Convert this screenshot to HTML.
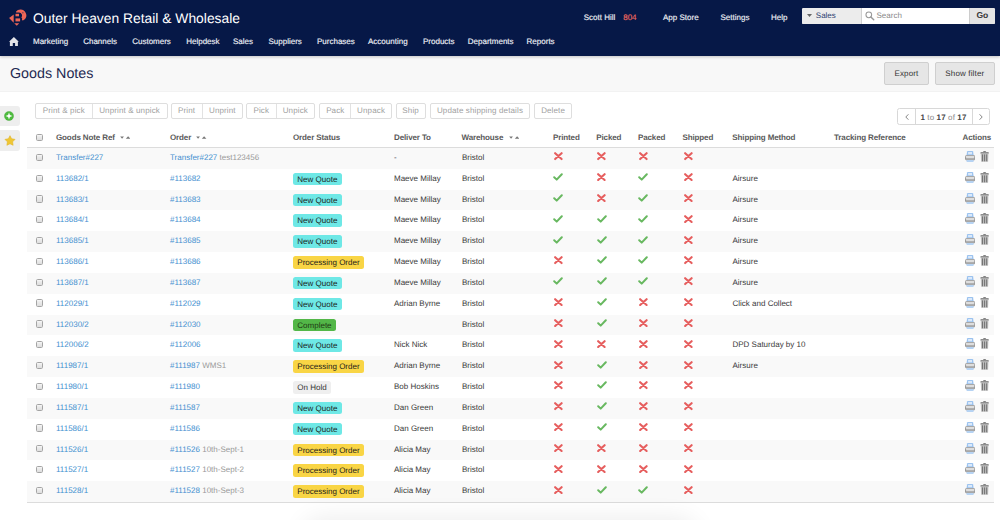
<!DOCTYPE html>
<html><head><meta charset="utf-8"><title>Goods Notes</title>
<style>
*{box-sizing:border-box;margin:0;padding:0}
html,body{width:1000px;height:520px;overflow:hidden;background:#fff}
body{position:relative;font-family:"Liberation Sans",sans-serif;font-size:8px;color:#333;text-rendering:geometricPrecision}
.abs{position:absolute;white-space:nowrap}
#top{position:absolute;left:0;top:0;width:1000px;height:56px;background:#061847;box-shadow:0 1px 3px rgba(0,0,0,0.22);z-index:2}
#brand{position:absolute;left:33px;top:12.3px;font-size:13.85px;line-height:13px;color:#fff;white-space:nowrap}
.nav{position:absolute;top:37.5px;line-height:8px;font-size:8px;color:#eef0f6;white-space:nowrap;-webkit-text-stroke:0.15px #eef0f6}
.rnav{position:absolute;top:14.25px;line-height:8px;font-size:8px;color:#eef0f6;white-space:nowrap;-webkit-text-stroke:0.15px #eef0f6}
#search{position:absolute;left:802px;top:8.3px;width:192.5px;height:15.3px;background:#fff;border-radius:1.5px;overflow:hidden}
#search .dd{position:absolute;left:0;top:0;width:60px;height:100%;background:#ececec;border-right:0.5px solid #d0d0d0}
#search .go{position:absolute;right:0;top:0;width:25.3px;height:100%;background:#e4e4e4;border-left:0.5px solid #ccc;font-weight:bold;font-size:8.5px;color:#333;text-align:center;line-height:15px}
#band{position:absolute;left:0;top:56px;width:1000px;height:36px;background:#f8f8f8;border-bottom:0.7px solid #f2f2f2}
#title{position:absolute;left:10px;top:66.6px;font-size:14.3px;line-height:15px;color:#1f2a52;white-space:nowrap}
.bbtn{position:absolute;top:62px;height:22.5px;background:#e6e6e6;border:0.7px solid #cfcfcf;border-radius:2px;color:#333;font-size:8px;line-height:21.5px;text-align:center;letter-spacing:0.15px}
.side{position:absolute;left:0;width:20.2px;height:20.7px;background:#eeeeee;border-radius:0 3px 3px 0}
.tb{position:absolute;top:103px;height:15.5px;border:0.7px solid #dedede;border-radius:2px;background:#fff;display:flex}
.tb span{display:block;height:100%;line-height:14px;color:#a0a0a0;text-align:center;white-space:nowrap;letter-spacing:0.13px}
.tb span+span{border-left:0.7px solid #e2e2e2}
#pag{position:absolute;left:897.4px;top:107.8px;width:92.3px;height:17px;border:0.7px solid #d8d8d8;border-radius:2.5px;background:#fff}
#pag .d1{position:absolute;left:16.8px;top:0;bottom:0;border-left:0.7px solid #d8d8d8}
#pag .d2{position:absolute;left:73.9px;top:0;bottom:0;border-left:0.7px solid #d8d8d8}
.th{position:absolute;top:133.5px;font-weight:bold;color:#5a5a5a;letter-spacing:-0.12px;line-height:8px;white-space:nowrap}
.sort{position:absolute;top:136.1px;width:10.4px;height:3.2px}
#hline{position:absolute;left:27px;top:146.8px;width:967px;height:1px;background:#dcdcdc}
#bline{position:absolute;left:27px;top:502px;width:967px;height:1px;background:#dcdcdc}
.row{position:absolute;left:27px;width:967px;height:20.83px}
.row.odd{background:#f9f9f9}
.row .t{position:absolute;top:0;line-height:19.3px;white-space:nowrap;color:#3a3a3a}
.lnk{color:#4490d0;text-decoration:none}
.row a.t{color:#4490d0}
.mut{color:#999}
.cb{position:absolute;left:9px;width:7.2px;height:7.2px;border:0.8px solid #a4a4a4;border-radius:1.6px;background:linear-gradient(#f2f2f2,#dedede);box-shadow:inset 0 0.5px 0.5px rgba(255,255,255,0.6)}
.th .cb{position:relative;left:0;display:block}
.badge{position:absolute;left:266.2px;top:3.9px;height:12.6px;line-height:13px;padding:0 4.15px;border-radius:2.5px;color:#1b1b1b;white-space:nowrap}
.b-nq{background:#6ee8e6}
.b-po{background:#f9d545}
.b-co{background:#53b748;color:#1e3a14}
.b-oh{background:#efefef;color:#333}
.icw{position:absolute;top:4.3px;line-height:0}
.ic{display:block}
.acts{position:absolute;left:937.8px;top:2.9px;width:30px;height:12px;line-height:0}
.acts .pr{position:absolute;left:0;top:0}
.acts .tr{position:absolute;left:15.1px;top:0}
</style></head><body>
<div id="top">
  <svg style="position:absolute;left:8.6px;top:9.4px" width="18" height="17.5" viewBox="0 0 18 17.5">
    <path d="M0.1 9 L4.7 5.4 L4.7 13.7 Z" fill="#ee6657"/>
    <path d="M7.1 2.4 Q8.8 0.2 12 0.4 Q16.6 1.1 17.4 6 Q17.6 9.6 13.9 11.6 L12.9 10.9 Q13.7 9.4 12.4 8.5 Q13.5 7.3 12.9 5.6 Q12.2 3.6 10 3.6 L7.1 3.6 Z" fill="#ee6657"/>
    <circle cx="13.9" cy="3.7" r="0.55" fill="#061847"/>
    <rect x="6.5" y="4.8" width="3.5" height="2.5" fill="#ee6657"/>
    <rect x="6.5" y="9.4" width="4.6" height="3" fill="#ee6657"/>
    <path d="M5.2 14.3 H10.2 L7.8 16.8 Z" fill="#ee6657"/>
  </svg>
  <div id="brand">Outer Heaven Retail &amp; Wholesale</div>
  <svg style="position:absolute;left:9.1px;top:36.6px" width="9.8" height="9.2" viewBox="0 0 9.8 9.2">
    <path d="M4.9 0.1 L9.8 4.7 L8.9 4.7 L8.9 9.2 L6.1 9.2 L6.1 6.1 L3.8 6.1 L3.8 9.2 L0.9 9.2 L0.9 4.7 L0 4.7 Z" fill="#e2e3e8"/>
  </svg>
  <span class="nav" style="left:33px">Marketing</span>
  <span class="nav" style="left:83.2px">Channels</span>
  <span class="nav" style="left:132.2px">Customers</span>
  <span class="nav" style="left:186.2px">Helpdesk</span>
  <span class="nav" style="left:233px">Sales</span>
  <span class="nav" style="left:268.5px">Suppliers</span>
  <span class="nav" style="left:317px">Purchases</span>
  <span class="nav" style="left:368px">Accounting</span>
  <span class="nav" style="left:423px">Products</span>
  <span class="nav" style="left:467.8px">Departments</span>
  <span class="nav" style="left:526.6px">Reports</span>
  <span class="rnav" style="left:583.7px">Scott Hill</span>
  <span class="rnav" style="left:623.2px;color:#f06a5e;-webkit-text-stroke:0.15px #f06a5e">804</span>
  <span class="rnav" style="left:663px">App Store</span>
  <span class="rnav" style="left:720.5px">Settings</span>
  <span class="rnav" style="left:771px">Help</span>
  <div id="search">
    <div class="dd">
      <svg style="position:absolute;left:5.2px;top:6px" width="5" height="3" viewBox="0 0 5 3"><path d="M0 0 H5 L2.5 3 Z" fill="#666"/></svg>
      <span class="abs" style="left:13.8px;top:3.9px;line-height:8px;color:#2d3e72">Sales</span>
    </div>
    <svg style="position:absolute;left:63.3px;top:3.1px" width="9.5" height="9.5" viewBox="0 0 10 10"><circle cx="4" cy="4" r="3" fill="none" stroke="#999" stroke-width="1.1"/><path d="M6.2 6.2 L9.2 9.2" stroke="#999" stroke-width="1.5" stroke-linecap="round"/></svg>
    <span class="abs" style="left:74.5px;top:3.9px;line-height:8px;color:#8a8a8a">Search</span>
    <div class="go">Go</div>
  </div>
</div>
<div id="band"></div>
<div id="title">Goods Notes</div>
<div class="bbtn" style="left:884.3px;width:44.4px">Export</div>
<div class="bbtn" style="left:935px;width:59.6px">Show filter</div>

<div class="side" style="top:105.8px">
  <svg style="position:absolute;left:4.3px;top:5.6px" width="10" height="10" viewBox="0 0 10 10"><circle cx="5" cy="5" r="4.6" fill="#4dbb3d" stroke="#3f9f33" stroke-width="0.35"/><path d="M1.6 5 L4.1 3.9 L5 1.6 L5.9 3.9 L8.4 5 L5.9 6.1 L5 8.4 L4.1 6.1 Z" fill="#fff"/></svg>
</div>
<div class="side" style="top:130.2px">
  <svg style="position:absolute;left:3.8px;top:4.6px" width="12" height="12" viewBox="0 0 12 12"><path d="M6.00 0.70 L7.62 3.78 L11.04 4.36 L8.62 6.85 L9.12 10.29 L6.00 8.75 L2.88 10.29 L3.38 6.85 L0.96 4.36 L4.38 3.78 Z" fill="#efc634" stroke="#e0b52a" stroke-width="0.6" stroke-linejoin="round"/></svg>
</div>

<div class="tb" style="left:35px;width:132.50px"><span style="width:56.50px">Print &amp; pick</span><span style="width:76.00px">Unprint &amp; unpick</span></div>
<div class="tb" style="left:170.5px;width:72.50px"><span style="width:31.00px">Print</span><span style="width:41.50px">Unprint</span></div>
<div class="tb" style="left:246px;width:69.00px"><span style="width:29.50px">Pick</span><span style="width:39.50px">Unpick</span></div>
<div class="tb" style="left:319.25px;width:72.50px"><span style="width:31.00px">Pack</span><span style="width:41.50px">Unpack</span></div>
<div class="tb" style="left:395.75px;width:29.75px"><span style="width:29.75px">Ship</span></div>
<div class="tb" style="left:429.6px;width:100.80px"><span style="width:100.80px">Update shipping details</span></div>
<div class="tb" style="left:534.2px;width:37.80px"><span style="width:37.80px">Delete</span></div>

<div id="pag">
  <div class="d1"></div><div class="d2"></div>
  <svg style="position:absolute;left:6.3px;top:5px" width="4" height="6" viewBox="0 0 4 6"><path d="M3.4 0.3 L0.8 3 L3.4 5.7" fill="none" stroke="#808080" stroke-width="0.95"/></svg>
  <span class="abs" style="left:22px;top:5.6px;line-height:8px;color:#888;letter-spacing:0.12px"><b style="color:#444">1</b> to <b style="color:#444">17</b> of <b style="color:#444">17</b></span>
  <svg style="position:absolute;left:80.6px;top:5px" width="4" height="6" viewBox="0 0 4 6"><path d="M0.6 0.3 L3.2 3 L0.6 5.7" fill="none" stroke="#808080" stroke-width="0.95"/></svg>
</div>

<div class="cb" style="position:absolute;left:35.7px;top:133.8px"></div>
<span class="th" style="left:56px">Goods Note Ref</span>
<svg class="sort" style="left:120px" viewBox="0 0 10 3"><path d="M0.2 0.4 H3.8 L2 2.6 Z M5.6 2.6 H10 L7.8 0.3 Z" fill="#777"/></svg>
<span class="th" style="left:170px">Order</span>
<svg class="sort" style="left:196.3px" viewBox="0 0 10 3"><path d="M0.2 0.4 H3.8 L2 2.6 Z M5.6 2.6 H10 L7.8 0.3 Z" fill="#777"/></svg>
<span class="th" style="left:293px">Order Status</span>
<span class="th" style="left:394px">Deliver To</span>
<span class="th" style="left:461.5px">Warehouse</span>
<svg class="sort" style="left:508.5px" viewBox="0 0 10 3"><path d="M0.2 0.4 H3.8 L2 2.6 Z M5.6 2.6 H10 L7.8 0.3 Z" fill="#777"/></svg>
<span class="th" style="left:553px">Printed</span>
<span class="th" style="left:596.3px">Picked</span>
<span class="th" style="left:638px">Packed</span>
<span class="th" style="left:682.5px">Shipped</span>
<span class="th" style="left:732.3px">Shipping Method</span>
<span class="th" style="left:834px">Tracking Reference</span>
<span class="th" style="left:962.6px">Actions</span>
<div id="hline"></div>
<div class="row odd" style="top:148.00px"><div class="cb" style="top:5.7px"></div><a class="t lnk" style="left:29px">Transfer#227</a><span class="t" style="left:143px"><a class="lnk">Transfer#227</a> <span class="mut">test123456</span></span><span class="t" style="left:367px">-</span><span class="t" style="left:435px">Bristol</span><span class="icw" style="left:527px"><svg class="ic" width="9" height="8.3" viewBox="0 0 9 8.3"><path d="M1.15 1.15 L7.6 7.1 M7.6 1.15 L1.15 7.1" fill="none" stroke="#e65e5e" stroke-width="2.1" stroke-linecap="round"/></svg></span><span class="icw" style="left:570.4px"><svg class="ic" width="9" height="8.3" viewBox="0 0 9 8.3"><path d="M1.15 1.15 L7.6 7.1 M7.6 1.15 L1.15 7.1" fill="none" stroke="#e65e5e" stroke-width="2.1" stroke-linecap="round"/></svg></span><span class="icw" style="left:612.25px"><svg class="ic" width="9" height="8.3" viewBox="0 0 9 8.3"><path d="M1.15 1.15 L7.6 7.1 M7.6 1.15 L1.15 7.1" fill="none" stroke="#e65e5e" stroke-width="2.1" stroke-linecap="round"/></svg></span><span class="icw" style="left:656.75px"><svg class="ic" width="9" height="8.3" viewBox="0 0 9 8.3"><path d="M1.15 1.15 L7.6 7.1 M7.6 1.15 L1.15 7.1" fill="none" stroke="#e65e5e" stroke-width="2.1" stroke-linecap="round"/></svg></span><span class="acts"><svg class="pr" width="10.2" height="11" viewBox="0 0 10.2 11">
<path d="M1.5 4.6 L2.1 0.5 Q2.2 0.1 2.6 0.1 H7.6 Q8 0.1 8.1 0.5 L8.7 4.6 Z" fill="#9cc3ef"/>
<rect x="3.1" y="1" width="3.9" height="2.3" fill="#dbe9fa"/>
<rect x="0" y="4.1" width="10.2" height="5.4" rx="2" fill="#949494"/>
<rect x="0.7" y="4.7" width="8.8" height="2.4" rx="1" fill="#dedede"/>
<rect x="0.7" y="7.2" width="8.8" height="1.3" rx="0.6" fill="#b9b9b9"/>
<path d="M1.5 8.9 H8.7 L8.5 10.9 H1.7 Z" fill="#b6d3f3"/>
</svg><svg class="tr" width="9.2" height="11" viewBox="0 0 9.2 11">
<path d="M2.9 1.3 Q3 0.1 4.6 0.1 Q6.2 0.1 6.3 1.3 Z" fill="#7c7c7c"/>
<path d="M0.4 1.7 Q0.4 1.1 1.1 1.1 H8.1 Q8.8 1.1 8.8 1.7 L8.7 2.8 H0.5 Z" fill="#8e8e8e"/>
<path d="M0.8 2.7 H8.4 L8.1 10.8 H1.1 Z" fill="#c0c0c0"/>
<rect x="2" y="3.4" width="1.05" height="6.9" fill="#747474"/>
<rect x="4.07" y="3.4" width="1.05" height="6.9" fill="#747474"/>
<rect x="6.15" y="3.4" width="1.05" height="6.9" fill="#747474"/>
</svg></span></div><div class="row" style="top:168.83px"><div class="cb" style="top:5.7px"></div><a class="t lnk" style="left:29px">113682/1</a><span class="t" style="left:143px"><a class="lnk">#113682</a></span><span class="badge b-nq">New Quote</span><span class="t" style="left:367px">Maeve Millay</span><span class="t" style="left:435px">Bristol</span><span class="icw" style="left:527px"><svg class="ic" style="margin-left:-0.9px" width="10" height="8" viewBox="0 0 10 8"><path d="M1.2 4.2 L3.7 6.6 L8.8 1.2" fill="none" stroke="#68b860" stroke-width="2" stroke-linecap="round" stroke-linejoin="round"/></svg></span><span class="icw" style="left:570.4px"><svg class="ic" width="9" height="8.3" viewBox="0 0 9 8.3"><path d="M1.15 1.15 L7.6 7.1 M7.6 1.15 L1.15 7.1" fill="none" stroke="#e65e5e" stroke-width="2.1" stroke-linecap="round"/></svg></span><span class="icw" style="left:612.25px"><svg class="ic" style="margin-left:-0.9px" width="10" height="8" viewBox="0 0 10 8"><path d="M1.2 4.2 L3.7 6.6 L8.8 1.2" fill="none" stroke="#68b860" stroke-width="2" stroke-linecap="round" stroke-linejoin="round"/></svg></span><span class="icw" style="left:656.75px"><svg class="ic" width="9" height="8.3" viewBox="0 0 9 8.3"><path d="M1.15 1.15 L7.6 7.1 M7.6 1.15 L1.15 7.1" fill="none" stroke="#e65e5e" stroke-width="2.1" stroke-linecap="round"/></svg></span><span class="t" style="left:705.5px">Airsure</span><span class="acts"><svg class="pr" width="10.2" height="11" viewBox="0 0 10.2 11">
<path d="M1.5 4.6 L2.1 0.5 Q2.2 0.1 2.6 0.1 H7.6 Q8 0.1 8.1 0.5 L8.7 4.6 Z" fill="#9cc3ef"/>
<rect x="3.1" y="1" width="3.9" height="2.3" fill="#dbe9fa"/>
<rect x="0" y="4.1" width="10.2" height="5.4" rx="2" fill="#949494"/>
<rect x="0.7" y="4.7" width="8.8" height="2.4" rx="1" fill="#dedede"/>
<rect x="0.7" y="7.2" width="8.8" height="1.3" rx="0.6" fill="#b9b9b9"/>
<path d="M1.5 8.9 H8.7 L8.5 10.9 H1.7 Z" fill="#b6d3f3"/>
</svg><svg class="tr" width="9.2" height="11" viewBox="0 0 9.2 11">
<path d="M2.9 1.3 Q3 0.1 4.6 0.1 Q6.2 0.1 6.3 1.3 Z" fill="#7c7c7c"/>
<path d="M0.4 1.7 Q0.4 1.1 1.1 1.1 H8.1 Q8.8 1.1 8.8 1.7 L8.7 2.8 H0.5 Z" fill="#8e8e8e"/>
<path d="M0.8 2.7 H8.4 L8.1 10.8 H1.1 Z" fill="#c0c0c0"/>
<rect x="2" y="3.4" width="1.05" height="6.9" fill="#747474"/>
<rect x="4.07" y="3.4" width="1.05" height="6.9" fill="#747474"/>
<rect x="6.15" y="3.4" width="1.05" height="6.9" fill="#747474"/>
</svg></span></div><div class="row odd" style="top:189.66px"><div class="cb" style="top:5.7px"></div><a class="t lnk" style="left:29px">113683/1</a><span class="t" style="left:143px"><a class="lnk">#113683</a></span><span class="badge b-nq">New Quote</span><span class="t" style="left:367px">Maeve Millay</span><span class="t" style="left:435px">Bristol</span><span class="icw" style="left:527px"><svg class="ic" style="margin-left:-0.9px" width="10" height="8" viewBox="0 0 10 8"><path d="M1.2 4.2 L3.7 6.6 L8.8 1.2" fill="none" stroke="#68b860" stroke-width="2" stroke-linecap="round" stroke-linejoin="round"/></svg></span><span class="icw" style="left:570.4px"><svg class="ic" width="9" height="8.3" viewBox="0 0 9 8.3"><path d="M1.15 1.15 L7.6 7.1 M7.6 1.15 L1.15 7.1" fill="none" stroke="#e65e5e" stroke-width="2.1" stroke-linecap="round"/></svg></span><span class="icw" style="left:612.25px"><svg class="ic" style="margin-left:-0.9px" width="10" height="8" viewBox="0 0 10 8"><path d="M1.2 4.2 L3.7 6.6 L8.8 1.2" fill="none" stroke="#68b860" stroke-width="2" stroke-linecap="round" stroke-linejoin="round"/></svg></span><span class="icw" style="left:656.75px"><svg class="ic" width="9" height="8.3" viewBox="0 0 9 8.3"><path d="M1.15 1.15 L7.6 7.1 M7.6 1.15 L1.15 7.1" fill="none" stroke="#e65e5e" stroke-width="2.1" stroke-linecap="round"/></svg></span><span class="t" style="left:705.5px">Airsure</span><span class="acts"><svg class="pr" width="10.2" height="11" viewBox="0 0 10.2 11">
<path d="M1.5 4.6 L2.1 0.5 Q2.2 0.1 2.6 0.1 H7.6 Q8 0.1 8.1 0.5 L8.7 4.6 Z" fill="#9cc3ef"/>
<rect x="3.1" y="1" width="3.9" height="2.3" fill="#dbe9fa"/>
<rect x="0" y="4.1" width="10.2" height="5.4" rx="2" fill="#949494"/>
<rect x="0.7" y="4.7" width="8.8" height="2.4" rx="1" fill="#dedede"/>
<rect x="0.7" y="7.2" width="8.8" height="1.3" rx="0.6" fill="#b9b9b9"/>
<path d="M1.5 8.9 H8.7 L8.5 10.9 H1.7 Z" fill="#b6d3f3"/>
</svg><svg class="tr" width="9.2" height="11" viewBox="0 0 9.2 11">
<path d="M2.9 1.3 Q3 0.1 4.6 0.1 Q6.2 0.1 6.3 1.3 Z" fill="#7c7c7c"/>
<path d="M0.4 1.7 Q0.4 1.1 1.1 1.1 H8.1 Q8.8 1.1 8.8 1.7 L8.7 2.8 H0.5 Z" fill="#8e8e8e"/>
<path d="M0.8 2.7 H8.4 L8.1 10.8 H1.1 Z" fill="#c0c0c0"/>
<rect x="2" y="3.4" width="1.05" height="6.9" fill="#747474"/>
<rect x="4.07" y="3.4" width="1.05" height="6.9" fill="#747474"/>
<rect x="6.15" y="3.4" width="1.05" height="6.9" fill="#747474"/>
</svg></span></div><div class="row" style="top:210.49px"><div class="cb" style="top:5.7px"></div><a class="t lnk" style="left:29px">113684/1</a><span class="t" style="left:143px"><a class="lnk">#113684</a></span><span class="badge b-nq">New Quote</span><span class="t" style="left:367px">Maeve Millay</span><span class="t" style="left:435px">Bristol</span><span class="icw" style="left:527px"><svg class="ic" style="margin-left:-0.9px" width="10" height="8" viewBox="0 0 10 8"><path d="M1.2 4.2 L3.7 6.6 L8.8 1.2" fill="none" stroke="#68b860" stroke-width="2" stroke-linecap="round" stroke-linejoin="round"/></svg></span><span class="icw" style="left:570.4px"><svg class="ic" style="margin-left:-0.9px" width="10" height="8" viewBox="0 0 10 8"><path d="M1.2 4.2 L3.7 6.6 L8.8 1.2" fill="none" stroke="#68b860" stroke-width="2" stroke-linecap="round" stroke-linejoin="round"/></svg></span><span class="icw" style="left:612.25px"><svg class="ic" style="margin-left:-0.9px" width="10" height="8" viewBox="0 0 10 8"><path d="M1.2 4.2 L3.7 6.6 L8.8 1.2" fill="none" stroke="#68b860" stroke-width="2" stroke-linecap="round" stroke-linejoin="round"/></svg></span><span class="icw" style="left:656.75px"><svg class="ic" width="9" height="8.3" viewBox="0 0 9 8.3"><path d="M1.15 1.15 L7.6 7.1 M7.6 1.15 L1.15 7.1" fill="none" stroke="#e65e5e" stroke-width="2.1" stroke-linecap="round"/></svg></span><span class="t" style="left:705.5px">Airsure</span><span class="acts"><svg class="pr" width="10.2" height="11" viewBox="0 0 10.2 11">
<path d="M1.5 4.6 L2.1 0.5 Q2.2 0.1 2.6 0.1 H7.6 Q8 0.1 8.1 0.5 L8.7 4.6 Z" fill="#9cc3ef"/>
<rect x="3.1" y="1" width="3.9" height="2.3" fill="#dbe9fa"/>
<rect x="0" y="4.1" width="10.2" height="5.4" rx="2" fill="#949494"/>
<rect x="0.7" y="4.7" width="8.8" height="2.4" rx="1" fill="#dedede"/>
<rect x="0.7" y="7.2" width="8.8" height="1.3" rx="0.6" fill="#b9b9b9"/>
<path d="M1.5 8.9 H8.7 L8.5 10.9 H1.7 Z" fill="#b6d3f3"/>
</svg><svg class="tr" width="9.2" height="11" viewBox="0 0 9.2 11">
<path d="M2.9 1.3 Q3 0.1 4.6 0.1 Q6.2 0.1 6.3 1.3 Z" fill="#7c7c7c"/>
<path d="M0.4 1.7 Q0.4 1.1 1.1 1.1 H8.1 Q8.8 1.1 8.8 1.7 L8.7 2.8 H0.5 Z" fill="#8e8e8e"/>
<path d="M0.8 2.7 H8.4 L8.1 10.8 H1.1 Z" fill="#c0c0c0"/>
<rect x="2" y="3.4" width="1.05" height="6.9" fill="#747474"/>
<rect x="4.07" y="3.4" width="1.05" height="6.9" fill="#747474"/>
<rect x="6.15" y="3.4" width="1.05" height="6.9" fill="#747474"/>
</svg></span></div><div class="row odd" style="top:231.32px"><div class="cb" style="top:5.7px"></div><a class="t lnk" style="left:29px">113685/1</a><span class="t" style="left:143px"><a class="lnk">#113685</a></span><span class="badge b-nq">New Quote</span><span class="t" style="left:367px">Maeve Millay</span><span class="t" style="left:435px">Bristol</span><span class="icw" style="left:527px"><svg class="ic" style="margin-left:-0.9px" width="10" height="8" viewBox="0 0 10 8"><path d="M1.2 4.2 L3.7 6.6 L8.8 1.2" fill="none" stroke="#68b860" stroke-width="2" stroke-linecap="round" stroke-linejoin="round"/></svg></span><span class="icw" style="left:570.4px"><svg class="ic" style="margin-left:-0.9px" width="10" height="8" viewBox="0 0 10 8"><path d="M1.2 4.2 L3.7 6.6 L8.8 1.2" fill="none" stroke="#68b860" stroke-width="2" stroke-linecap="round" stroke-linejoin="round"/></svg></span><span class="icw" style="left:612.25px"><svg class="ic" style="margin-left:-0.9px" width="10" height="8" viewBox="0 0 10 8"><path d="M1.2 4.2 L3.7 6.6 L8.8 1.2" fill="none" stroke="#68b860" stroke-width="2" stroke-linecap="round" stroke-linejoin="round"/></svg></span><span class="icw" style="left:656.75px"><svg class="ic" width="9" height="8.3" viewBox="0 0 9 8.3"><path d="M1.15 1.15 L7.6 7.1 M7.6 1.15 L1.15 7.1" fill="none" stroke="#e65e5e" stroke-width="2.1" stroke-linecap="round"/></svg></span><span class="t" style="left:705.5px">Airsure</span><span class="acts"><svg class="pr" width="10.2" height="11" viewBox="0 0 10.2 11">
<path d="M1.5 4.6 L2.1 0.5 Q2.2 0.1 2.6 0.1 H7.6 Q8 0.1 8.1 0.5 L8.7 4.6 Z" fill="#9cc3ef"/>
<rect x="3.1" y="1" width="3.9" height="2.3" fill="#dbe9fa"/>
<rect x="0" y="4.1" width="10.2" height="5.4" rx="2" fill="#949494"/>
<rect x="0.7" y="4.7" width="8.8" height="2.4" rx="1" fill="#dedede"/>
<rect x="0.7" y="7.2" width="8.8" height="1.3" rx="0.6" fill="#b9b9b9"/>
<path d="M1.5 8.9 H8.7 L8.5 10.9 H1.7 Z" fill="#b6d3f3"/>
</svg><svg class="tr" width="9.2" height="11" viewBox="0 0 9.2 11">
<path d="M2.9 1.3 Q3 0.1 4.6 0.1 Q6.2 0.1 6.3 1.3 Z" fill="#7c7c7c"/>
<path d="M0.4 1.7 Q0.4 1.1 1.1 1.1 H8.1 Q8.8 1.1 8.8 1.7 L8.7 2.8 H0.5 Z" fill="#8e8e8e"/>
<path d="M0.8 2.7 H8.4 L8.1 10.8 H1.1 Z" fill="#c0c0c0"/>
<rect x="2" y="3.4" width="1.05" height="6.9" fill="#747474"/>
<rect x="4.07" y="3.4" width="1.05" height="6.9" fill="#747474"/>
<rect x="6.15" y="3.4" width="1.05" height="6.9" fill="#747474"/>
</svg></span></div><div class="row" style="top:252.15px"><div class="cb" style="top:5.7px"></div><a class="t lnk" style="left:29px">113686/1</a><span class="t" style="left:143px"><a class="lnk">#113686</a></span><span class="badge b-po">Processing Order</span><span class="t" style="left:367px">Maeve Millay</span><span class="t" style="left:435px">Bristol</span><span class="icw" style="left:527px"><svg class="ic" width="9" height="8.3" viewBox="0 0 9 8.3"><path d="M1.15 1.15 L7.6 7.1 M7.6 1.15 L1.15 7.1" fill="none" stroke="#e65e5e" stroke-width="2.1" stroke-linecap="round"/></svg></span><span class="icw" style="left:570.4px"><svg class="ic" style="margin-left:-0.9px" width="10" height="8" viewBox="0 0 10 8"><path d="M1.2 4.2 L3.7 6.6 L8.8 1.2" fill="none" stroke="#68b860" stroke-width="2" stroke-linecap="round" stroke-linejoin="round"/></svg></span><span class="icw" style="left:612.25px"><svg class="ic" style="margin-left:-0.9px" width="10" height="8" viewBox="0 0 10 8"><path d="M1.2 4.2 L3.7 6.6 L8.8 1.2" fill="none" stroke="#68b860" stroke-width="2" stroke-linecap="round" stroke-linejoin="round"/></svg></span><span class="icw" style="left:656.75px"><svg class="ic" width="9" height="8.3" viewBox="0 0 9 8.3"><path d="M1.15 1.15 L7.6 7.1 M7.6 1.15 L1.15 7.1" fill="none" stroke="#e65e5e" stroke-width="2.1" stroke-linecap="round"/></svg></span><span class="t" style="left:705.5px">Airsure</span><span class="acts"><svg class="pr" width="10.2" height="11" viewBox="0 0 10.2 11">
<path d="M1.5 4.6 L2.1 0.5 Q2.2 0.1 2.6 0.1 H7.6 Q8 0.1 8.1 0.5 L8.7 4.6 Z" fill="#9cc3ef"/>
<rect x="3.1" y="1" width="3.9" height="2.3" fill="#dbe9fa"/>
<rect x="0" y="4.1" width="10.2" height="5.4" rx="2" fill="#949494"/>
<rect x="0.7" y="4.7" width="8.8" height="2.4" rx="1" fill="#dedede"/>
<rect x="0.7" y="7.2" width="8.8" height="1.3" rx="0.6" fill="#b9b9b9"/>
<path d="M1.5 8.9 H8.7 L8.5 10.9 H1.7 Z" fill="#b6d3f3"/>
</svg><svg class="tr" width="9.2" height="11" viewBox="0 0 9.2 11">
<path d="M2.9 1.3 Q3 0.1 4.6 0.1 Q6.2 0.1 6.3 1.3 Z" fill="#7c7c7c"/>
<path d="M0.4 1.7 Q0.4 1.1 1.1 1.1 H8.1 Q8.8 1.1 8.8 1.7 L8.7 2.8 H0.5 Z" fill="#8e8e8e"/>
<path d="M0.8 2.7 H8.4 L8.1 10.8 H1.1 Z" fill="#c0c0c0"/>
<rect x="2" y="3.4" width="1.05" height="6.9" fill="#747474"/>
<rect x="4.07" y="3.4" width="1.05" height="6.9" fill="#747474"/>
<rect x="6.15" y="3.4" width="1.05" height="6.9" fill="#747474"/>
</svg></span></div><div class="row odd" style="top:272.98px"><div class="cb" style="top:5.7px"></div><a class="t lnk" style="left:29px">113687/1</a><span class="t" style="left:143px"><a class="lnk">#113687</a></span><span class="badge b-nq">New Quote</span><span class="t" style="left:367px">Maeve Millay</span><span class="t" style="left:435px">Bristol</span><span class="icw" style="left:527px"><svg class="ic" style="margin-left:-0.9px" width="10" height="8" viewBox="0 0 10 8"><path d="M1.2 4.2 L3.7 6.6 L8.8 1.2" fill="none" stroke="#68b860" stroke-width="2" stroke-linecap="round" stroke-linejoin="round"/></svg></span><span class="icw" style="left:570.4px"><svg class="ic" style="margin-left:-0.9px" width="10" height="8" viewBox="0 0 10 8"><path d="M1.2 4.2 L3.7 6.6 L8.8 1.2" fill="none" stroke="#68b860" stroke-width="2" stroke-linecap="round" stroke-linejoin="round"/></svg></span><span class="icw" style="left:612.25px"><svg class="ic" style="margin-left:-0.9px" width="10" height="8" viewBox="0 0 10 8"><path d="M1.2 4.2 L3.7 6.6 L8.8 1.2" fill="none" stroke="#68b860" stroke-width="2" stroke-linecap="round" stroke-linejoin="round"/></svg></span><span class="icw" style="left:656.75px"><svg class="ic" width="9" height="8.3" viewBox="0 0 9 8.3"><path d="M1.15 1.15 L7.6 7.1 M7.6 1.15 L1.15 7.1" fill="none" stroke="#e65e5e" stroke-width="2.1" stroke-linecap="round"/></svg></span><span class="t" style="left:705.5px">Airsure</span><span class="acts"><svg class="pr" width="10.2" height="11" viewBox="0 0 10.2 11">
<path d="M1.5 4.6 L2.1 0.5 Q2.2 0.1 2.6 0.1 H7.6 Q8 0.1 8.1 0.5 L8.7 4.6 Z" fill="#9cc3ef"/>
<rect x="3.1" y="1" width="3.9" height="2.3" fill="#dbe9fa"/>
<rect x="0" y="4.1" width="10.2" height="5.4" rx="2" fill="#949494"/>
<rect x="0.7" y="4.7" width="8.8" height="2.4" rx="1" fill="#dedede"/>
<rect x="0.7" y="7.2" width="8.8" height="1.3" rx="0.6" fill="#b9b9b9"/>
<path d="M1.5 8.9 H8.7 L8.5 10.9 H1.7 Z" fill="#b6d3f3"/>
</svg><svg class="tr" width="9.2" height="11" viewBox="0 0 9.2 11">
<path d="M2.9 1.3 Q3 0.1 4.6 0.1 Q6.2 0.1 6.3 1.3 Z" fill="#7c7c7c"/>
<path d="M0.4 1.7 Q0.4 1.1 1.1 1.1 H8.1 Q8.8 1.1 8.8 1.7 L8.7 2.8 H0.5 Z" fill="#8e8e8e"/>
<path d="M0.8 2.7 H8.4 L8.1 10.8 H1.1 Z" fill="#c0c0c0"/>
<rect x="2" y="3.4" width="1.05" height="6.9" fill="#747474"/>
<rect x="4.07" y="3.4" width="1.05" height="6.9" fill="#747474"/>
<rect x="6.15" y="3.4" width="1.05" height="6.9" fill="#747474"/>
</svg></span></div><div class="row" style="top:293.81px"><div class="cb" style="top:5.7px"></div><a class="t lnk" style="left:29px">112029/1</a><span class="t" style="left:143px"><a class="lnk">#112029</a></span><span class="badge b-nq">New Quote</span><span class="t" style="left:367px">Adrian Byrne</span><span class="t" style="left:435px">Bristol</span><span class="icw" style="left:527px"><svg class="ic" width="9" height="8.3" viewBox="0 0 9 8.3"><path d="M1.15 1.15 L7.6 7.1 M7.6 1.15 L1.15 7.1" fill="none" stroke="#e65e5e" stroke-width="2.1" stroke-linecap="round"/></svg></span><span class="icw" style="left:570.4px"><svg class="ic" style="margin-left:-0.9px" width="10" height="8" viewBox="0 0 10 8"><path d="M1.2 4.2 L3.7 6.6 L8.8 1.2" fill="none" stroke="#68b860" stroke-width="2" stroke-linecap="round" stroke-linejoin="round"/></svg></span><span class="icw" style="left:612.25px"><svg class="ic" width="9" height="8.3" viewBox="0 0 9 8.3"><path d="M1.15 1.15 L7.6 7.1 M7.6 1.15 L1.15 7.1" fill="none" stroke="#e65e5e" stroke-width="2.1" stroke-linecap="round"/></svg></span><span class="icw" style="left:656.75px"><svg class="ic" width="9" height="8.3" viewBox="0 0 9 8.3"><path d="M1.15 1.15 L7.6 7.1 M7.6 1.15 L1.15 7.1" fill="none" stroke="#e65e5e" stroke-width="2.1" stroke-linecap="round"/></svg></span><span class="t" style="left:705.5px">Click and Collect</span><span class="acts"><svg class="pr" width="10.2" height="11" viewBox="0 0 10.2 11">
<path d="M1.5 4.6 L2.1 0.5 Q2.2 0.1 2.6 0.1 H7.6 Q8 0.1 8.1 0.5 L8.7 4.6 Z" fill="#9cc3ef"/>
<rect x="3.1" y="1" width="3.9" height="2.3" fill="#dbe9fa"/>
<rect x="0" y="4.1" width="10.2" height="5.4" rx="2" fill="#949494"/>
<rect x="0.7" y="4.7" width="8.8" height="2.4" rx="1" fill="#dedede"/>
<rect x="0.7" y="7.2" width="8.8" height="1.3" rx="0.6" fill="#b9b9b9"/>
<path d="M1.5 8.9 H8.7 L8.5 10.9 H1.7 Z" fill="#b6d3f3"/>
</svg><svg class="tr" width="9.2" height="11" viewBox="0 0 9.2 11">
<path d="M2.9 1.3 Q3 0.1 4.6 0.1 Q6.2 0.1 6.3 1.3 Z" fill="#7c7c7c"/>
<path d="M0.4 1.7 Q0.4 1.1 1.1 1.1 H8.1 Q8.8 1.1 8.8 1.7 L8.7 2.8 H0.5 Z" fill="#8e8e8e"/>
<path d="M0.8 2.7 H8.4 L8.1 10.8 H1.1 Z" fill="#c0c0c0"/>
<rect x="2" y="3.4" width="1.05" height="6.9" fill="#747474"/>
<rect x="4.07" y="3.4" width="1.05" height="6.9" fill="#747474"/>
<rect x="6.15" y="3.4" width="1.05" height="6.9" fill="#747474"/>
</svg></span></div><div class="row odd" style="top:314.64px"><div class="cb" style="top:5.7px"></div><a class="t lnk" style="left:29px">112030/2</a><span class="t" style="left:143px"><a class="lnk">#112030</a></span><span class="badge b-co">Complete</span><span class="t" style="left:435px">Bristol</span><span class="icw" style="left:527px"><svg class="ic" width="9" height="8.3" viewBox="0 0 9 8.3"><path d="M1.15 1.15 L7.6 7.1 M7.6 1.15 L1.15 7.1" fill="none" stroke="#e65e5e" stroke-width="2.1" stroke-linecap="round"/></svg></span><span class="icw" style="left:570.4px"><svg class="ic" style="margin-left:-0.9px" width="10" height="8" viewBox="0 0 10 8"><path d="M1.2 4.2 L3.7 6.6 L8.8 1.2" fill="none" stroke="#68b860" stroke-width="2" stroke-linecap="round" stroke-linejoin="round"/></svg></span><span class="icw" style="left:612.25px"><svg class="ic" width="9" height="8.3" viewBox="0 0 9 8.3"><path d="M1.15 1.15 L7.6 7.1 M7.6 1.15 L1.15 7.1" fill="none" stroke="#e65e5e" stroke-width="2.1" stroke-linecap="round"/></svg></span><span class="icw" style="left:656.75px"><svg class="ic" width="9" height="8.3" viewBox="0 0 9 8.3"><path d="M1.15 1.15 L7.6 7.1 M7.6 1.15 L1.15 7.1" fill="none" stroke="#e65e5e" stroke-width="2.1" stroke-linecap="round"/></svg></span><span class="acts"><svg class="pr" width="10.2" height="11" viewBox="0 0 10.2 11">
<path d="M1.5 4.6 L2.1 0.5 Q2.2 0.1 2.6 0.1 H7.6 Q8 0.1 8.1 0.5 L8.7 4.6 Z" fill="#9cc3ef"/>
<rect x="3.1" y="1" width="3.9" height="2.3" fill="#dbe9fa"/>
<rect x="0" y="4.1" width="10.2" height="5.4" rx="2" fill="#949494"/>
<rect x="0.7" y="4.7" width="8.8" height="2.4" rx="1" fill="#dedede"/>
<rect x="0.7" y="7.2" width="8.8" height="1.3" rx="0.6" fill="#b9b9b9"/>
<path d="M1.5 8.9 H8.7 L8.5 10.9 H1.7 Z" fill="#b6d3f3"/>
</svg><svg class="tr" width="9.2" height="11" viewBox="0 0 9.2 11">
<path d="M2.9 1.3 Q3 0.1 4.6 0.1 Q6.2 0.1 6.3 1.3 Z" fill="#7c7c7c"/>
<path d="M0.4 1.7 Q0.4 1.1 1.1 1.1 H8.1 Q8.8 1.1 8.8 1.7 L8.7 2.8 H0.5 Z" fill="#8e8e8e"/>
<path d="M0.8 2.7 H8.4 L8.1 10.8 H1.1 Z" fill="#c0c0c0"/>
<rect x="2" y="3.4" width="1.05" height="6.9" fill="#747474"/>
<rect x="4.07" y="3.4" width="1.05" height="6.9" fill="#747474"/>
<rect x="6.15" y="3.4" width="1.05" height="6.9" fill="#747474"/>
</svg></span></div><div class="row" style="top:335.47px"><div class="cb" style="top:5.7px"></div><a class="t lnk" style="left:29px">112006/2</a><span class="t" style="left:143px"><a class="lnk">#112006</a></span><span class="badge b-nq">New Quote</span><span class="t" style="left:367px">Nick Nick</span><span class="t" style="left:435px">Bristol</span><span class="icw" style="left:527px"><svg class="ic" width="9" height="8.3" viewBox="0 0 9 8.3"><path d="M1.15 1.15 L7.6 7.1 M7.6 1.15 L1.15 7.1" fill="none" stroke="#e65e5e" stroke-width="2.1" stroke-linecap="round"/></svg></span><span class="icw" style="left:570.4px"><svg class="ic" width="9" height="8.3" viewBox="0 0 9 8.3"><path d="M1.15 1.15 L7.6 7.1 M7.6 1.15 L1.15 7.1" fill="none" stroke="#e65e5e" stroke-width="2.1" stroke-linecap="round"/></svg></span><span class="icw" style="left:612.25px"><svg class="ic" width="9" height="8.3" viewBox="0 0 9 8.3"><path d="M1.15 1.15 L7.6 7.1 M7.6 1.15 L1.15 7.1" fill="none" stroke="#e65e5e" stroke-width="2.1" stroke-linecap="round"/></svg></span><span class="icw" style="left:656.75px"><svg class="ic" width="9" height="8.3" viewBox="0 0 9 8.3"><path d="M1.15 1.15 L7.6 7.1 M7.6 1.15 L1.15 7.1" fill="none" stroke="#e65e5e" stroke-width="2.1" stroke-linecap="round"/></svg></span><span class="t" style="left:705.5px">DPD Saturday by 10</span><span class="acts"><svg class="pr" width="10.2" height="11" viewBox="0 0 10.2 11">
<path d="M1.5 4.6 L2.1 0.5 Q2.2 0.1 2.6 0.1 H7.6 Q8 0.1 8.1 0.5 L8.7 4.6 Z" fill="#9cc3ef"/>
<rect x="3.1" y="1" width="3.9" height="2.3" fill="#dbe9fa"/>
<rect x="0" y="4.1" width="10.2" height="5.4" rx="2" fill="#949494"/>
<rect x="0.7" y="4.7" width="8.8" height="2.4" rx="1" fill="#dedede"/>
<rect x="0.7" y="7.2" width="8.8" height="1.3" rx="0.6" fill="#b9b9b9"/>
<path d="M1.5 8.9 H8.7 L8.5 10.9 H1.7 Z" fill="#b6d3f3"/>
</svg><svg class="tr" width="9.2" height="11" viewBox="0 0 9.2 11">
<path d="M2.9 1.3 Q3 0.1 4.6 0.1 Q6.2 0.1 6.3 1.3 Z" fill="#7c7c7c"/>
<path d="M0.4 1.7 Q0.4 1.1 1.1 1.1 H8.1 Q8.8 1.1 8.8 1.7 L8.7 2.8 H0.5 Z" fill="#8e8e8e"/>
<path d="M0.8 2.7 H8.4 L8.1 10.8 H1.1 Z" fill="#c0c0c0"/>
<rect x="2" y="3.4" width="1.05" height="6.9" fill="#747474"/>
<rect x="4.07" y="3.4" width="1.05" height="6.9" fill="#747474"/>
<rect x="6.15" y="3.4" width="1.05" height="6.9" fill="#747474"/>
</svg></span></div><div class="row odd" style="top:356.30px"><div class="cb" style="top:5.7px"></div><a class="t lnk" style="left:29px">111987/1</a><span class="t" style="left:143px"><a class="lnk">#111987</a> <span class="mut">WMS1</span></span><span class="badge b-po">Processing Order</span><span class="t" style="left:367px">Adrian Byrne</span><span class="t" style="left:435px">Bristol</span><span class="icw" style="left:527px"><svg class="ic" width="9" height="8.3" viewBox="0 0 9 8.3"><path d="M1.15 1.15 L7.6 7.1 M7.6 1.15 L1.15 7.1" fill="none" stroke="#e65e5e" stroke-width="2.1" stroke-linecap="round"/></svg></span><span class="icw" style="left:570.4px"><svg class="ic" style="margin-left:-0.9px" width="10" height="8" viewBox="0 0 10 8"><path d="M1.2 4.2 L3.7 6.6 L8.8 1.2" fill="none" stroke="#68b860" stroke-width="2" stroke-linecap="round" stroke-linejoin="round"/></svg></span><span class="icw" style="left:612.25px"><svg class="ic" width="9" height="8.3" viewBox="0 0 9 8.3"><path d="M1.15 1.15 L7.6 7.1 M7.6 1.15 L1.15 7.1" fill="none" stroke="#e65e5e" stroke-width="2.1" stroke-linecap="round"/></svg></span><span class="icw" style="left:656.75px"><svg class="ic" width="9" height="8.3" viewBox="0 0 9 8.3"><path d="M1.15 1.15 L7.6 7.1 M7.6 1.15 L1.15 7.1" fill="none" stroke="#e65e5e" stroke-width="2.1" stroke-linecap="round"/></svg></span><span class="t" style="left:705.5px">Airsure</span><span class="acts"><svg class="pr" width="10.2" height="11" viewBox="0 0 10.2 11">
<path d="M1.5 4.6 L2.1 0.5 Q2.2 0.1 2.6 0.1 H7.6 Q8 0.1 8.1 0.5 L8.7 4.6 Z" fill="#9cc3ef"/>
<rect x="3.1" y="1" width="3.9" height="2.3" fill="#dbe9fa"/>
<rect x="0" y="4.1" width="10.2" height="5.4" rx="2" fill="#949494"/>
<rect x="0.7" y="4.7" width="8.8" height="2.4" rx="1" fill="#dedede"/>
<rect x="0.7" y="7.2" width="8.8" height="1.3" rx="0.6" fill="#b9b9b9"/>
<path d="M1.5 8.9 H8.7 L8.5 10.9 H1.7 Z" fill="#b6d3f3"/>
</svg><svg class="tr" width="9.2" height="11" viewBox="0 0 9.2 11">
<path d="M2.9 1.3 Q3 0.1 4.6 0.1 Q6.2 0.1 6.3 1.3 Z" fill="#7c7c7c"/>
<path d="M0.4 1.7 Q0.4 1.1 1.1 1.1 H8.1 Q8.8 1.1 8.8 1.7 L8.7 2.8 H0.5 Z" fill="#8e8e8e"/>
<path d="M0.8 2.7 H8.4 L8.1 10.8 H1.1 Z" fill="#c0c0c0"/>
<rect x="2" y="3.4" width="1.05" height="6.9" fill="#747474"/>
<rect x="4.07" y="3.4" width="1.05" height="6.9" fill="#747474"/>
<rect x="6.15" y="3.4" width="1.05" height="6.9" fill="#747474"/>
</svg></span></div><div class="row" style="top:377.13px"><div class="cb" style="top:5.7px"></div><a class="t lnk" style="left:29px">111980/1</a><span class="t" style="left:143px"><a class="lnk">#111980</a></span><span class="badge b-oh">On Hold</span><span class="t" style="left:367px">Bob Hoskins</span><span class="t" style="left:435px">Bristol</span><span class="icw" style="left:527px"><svg class="ic" width="9" height="8.3" viewBox="0 0 9 8.3"><path d="M1.15 1.15 L7.6 7.1 M7.6 1.15 L1.15 7.1" fill="none" stroke="#e65e5e" stroke-width="2.1" stroke-linecap="round"/></svg></span><span class="icw" style="left:570.4px"><svg class="ic" style="margin-left:-0.9px" width="10" height="8" viewBox="0 0 10 8"><path d="M1.2 4.2 L3.7 6.6 L8.8 1.2" fill="none" stroke="#68b860" stroke-width="2" stroke-linecap="round" stroke-linejoin="round"/></svg></span><span class="icw" style="left:612.25px"><svg class="ic" width="9" height="8.3" viewBox="0 0 9 8.3"><path d="M1.15 1.15 L7.6 7.1 M7.6 1.15 L1.15 7.1" fill="none" stroke="#e65e5e" stroke-width="2.1" stroke-linecap="round"/></svg></span><span class="icw" style="left:656.75px"><svg class="ic" width="9" height="8.3" viewBox="0 0 9 8.3"><path d="M1.15 1.15 L7.6 7.1 M7.6 1.15 L1.15 7.1" fill="none" stroke="#e65e5e" stroke-width="2.1" stroke-linecap="round"/></svg></span><span class="acts"><svg class="pr" width="10.2" height="11" viewBox="0 0 10.2 11">
<path d="M1.5 4.6 L2.1 0.5 Q2.2 0.1 2.6 0.1 H7.6 Q8 0.1 8.1 0.5 L8.7 4.6 Z" fill="#9cc3ef"/>
<rect x="3.1" y="1" width="3.9" height="2.3" fill="#dbe9fa"/>
<rect x="0" y="4.1" width="10.2" height="5.4" rx="2" fill="#949494"/>
<rect x="0.7" y="4.7" width="8.8" height="2.4" rx="1" fill="#dedede"/>
<rect x="0.7" y="7.2" width="8.8" height="1.3" rx="0.6" fill="#b9b9b9"/>
<path d="M1.5 8.9 H8.7 L8.5 10.9 H1.7 Z" fill="#b6d3f3"/>
</svg><svg class="tr" width="9.2" height="11" viewBox="0 0 9.2 11">
<path d="M2.9 1.3 Q3 0.1 4.6 0.1 Q6.2 0.1 6.3 1.3 Z" fill="#7c7c7c"/>
<path d="M0.4 1.7 Q0.4 1.1 1.1 1.1 H8.1 Q8.8 1.1 8.8 1.7 L8.7 2.8 H0.5 Z" fill="#8e8e8e"/>
<path d="M0.8 2.7 H8.4 L8.1 10.8 H1.1 Z" fill="#c0c0c0"/>
<rect x="2" y="3.4" width="1.05" height="6.9" fill="#747474"/>
<rect x="4.07" y="3.4" width="1.05" height="6.9" fill="#747474"/>
<rect x="6.15" y="3.4" width="1.05" height="6.9" fill="#747474"/>
</svg></span></div><div class="row odd" style="top:397.96px"><div class="cb" style="top:5.7px"></div><a class="t lnk" style="left:29px">111587/1</a><span class="t" style="left:143px"><a class="lnk">#111587</a></span><span class="badge b-nq">New Quote</span><span class="t" style="left:367px">Dan Green</span><span class="t" style="left:435px">Bristol</span><span class="icw" style="left:527px"><svg class="ic" width="9" height="8.3" viewBox="0 0 9 8.3"><path d="M1.15 1.15 L7.6 7.1 M7.6 1.15 L1.15 7.1" fill="none" stroke="#e65e5e" stroke-width="2.1" stroke-linecap="round"/></svg></span><span class="icw" style="left:570.4px"><svg class="ic" style="margin-left:-0.9px" width="10" height="8" viewBox="0 0 10 8"><path d="M1.2 4.2 L3.7 6.6 L8.8 1.2" fill="none" stroke="#68b860" stroke-width="2" stroke-linecap="round" stroke-linejoin="round"/></svg></span><span class="icw" style="left:612.25px"><svg class="ic" width="9" height="8.3" viewBox="0 0 9 8.3"><path d="M1.15 1.15 L7.6 7.1 M7.6 1.15 L1.15 7.1" fill="none" stroke="#e65e5e" stroke-width="2.1" stroke-linecap="round"/></svg></span><span class="icw" style="left:656.75px"><svg class="ic" width="9" height="8.3" viewBox="0 0 9 8.3"><path d="M1.15 1.15 L7.6 7.1 M7.6 1.15 L1.15 7.1" fill="none" stroke="#e65e5e" stroke-width="2.1" stroke-linecap="round"/></svg></span><span class="acts"><svg class="pr" width="10.2" height="11" viewBox="0 0 10.2 11">
<path d="M1.5 4.6 L2.1 0.5 Q2.2 0.1 2.6 0.1 H7.6 Q8 0.1 8.1 0.5 L8.7 4.6 Z" fill="#9cc3ef"/>
<rect x="3.1" y="1" width="3.9" height="2.3" fill="#dbe9fa"/>
<rect x="0" y="4.1" width="10.2" height="5.4" rx="2" fill="#949494"/>
<rect x="0.7" y="4.7" width="8.8" height="2.4" rx="1" fill="#dedede"/>
<rect x="0.7" y="7.2" width="8.8" height="1.3" rx="0.6" fill="#b9b9b9"/>
<path d="M1.5 8.9 H8.7 L8.5 10.9 H1.7 Z" fill="#b6d3f3"/>
</svg><svg class="tr" width="9.2" height="11" viewBox="0 0 9.2 11">
<path d="M2.9 1.3 Q3 0.1 4.6 0.1 Q6.2 0.1 6.3 1.3 Z" fill="#7c7c7c"/>
<path d="M0.4 1.7 Q0.4 1.1 1.1 1.1 H8.1 Q8.8 1.1 8.8 1.7 L8.7 2.8 H0.5 Z" fill="#8e8e8e"/>
<path d="M0.8 2.7 H8.4 L8.1 10.8 H1.1 Z" fill="#c0c0c0"/>
<rect x="2" y="3.4" width="1.05" height="6.9" fill="#747474"/>
<rect x="4.07" y="3.4" width="1.05" height="6.9" fill="#747474"/>
<rect x="6.15" y="3.4" width="1.05" height="6.9" fill="#747474"/>
</svg></span></div><div class="row" style="top:418.79px"><div class="cb" style="top:5.7px"></div><a class="t lnk" style="left:29px">111586/1</a><span class="t" style="left:143px"><a class="lnk">#111586</a></span><span class="badge b-nq">New Quote</span><span class="t" style="left:367px">Dan Green</span><span class="t" style="left:435px">Bristol</span><span class="icw" style="left:527px"><svg class="ic" width="9" height="8.3" viewBox="0 0 9 8.3"><path d="M1.15 1.15 L7.6 7.1 M7.6 1.15 L1.15 7.1" fill="none" stroke="#e65e5e" stroke-width="2.1" stroke-linecap="round"/></svg></span><span class="icw" style="left:570.4px"><svg class="ic" style="margin-left:-0.9px" width="10" height="8" viewBox="0 0 10 8"><path d="M1.2 4.2 L3.7 6.6 L8.8 1.2" fill="none" stroke="#68b860" stroke-width="2" stroke-linecap="round" stroke-linejoin="round"/></svg></span><span class="icw" style="left:612.25px"><svg class="ic" width="9" height="8.3" viewBox="0 0 9 8.3"><path d="M1.15 1.15 L7.6 7.1 M7.6 1.15 L1.15 7.1" fill="none" stroke="#e65e5e" stroke-width="2.1" stroke-linecap="round"/></svg></span><span class="icw" style="left:656.75px"><svg class="ic" width="9" height="8.3" viewBox="0 0 9 8.3"><path d="M1.15 1.15 L7.6 7.1 M7.6 1.15 L1.15 7.1" fill="none" stroke="#e65e5e" stroke-width="2.1" stroke-linecap="round"/></svg></span><span class="acts"><svg class="pr" width="10.2" height="11" viewBox="0 0 10.2 11">
<path d="M1.5 4.6 L2.1 0.5 Q2.2 0.1 2.6 0.1 H7.6 Q8 0.1 8.1 0.5 L8.7 4.6 Z" fill="#9cc3ef"/>
<rect x="3.1" y="1" width="3.9" height="2.3" fill="#dbe9fa"/>
<rect x="0" y="4.1" width="10.2" height="5.4" rx="2" fill="#949494"/>
<rect x="0.7" y="4.7" width="8.8" height="2.4" rx="1" fill="#dedede"/>
<rect x="0.7" y="7.2" width="8.8" height="1.3" rx="0.6" fill="#b9b9b9"/>
<path d="M1.5 8.9 H8.7 L8.5 10.9 H1.7 Z" fill="#b6d3f3"/>
</svg><svg class="tr" width="9.2" height="11" viewBox="0 0 9.2 11">
<path d="M2.9 1.3 Q3 0.1 4.6 0.1 Q6.2 0.1 6.3 1.3 Z" fill="#7c7c7c"/>
<path d="M0.4 1.7 Q0.4 1.1 1.1 1.1 H8.1 Q8.8 1.1 8.8 1.7 L8.7 2.8 H0.5 Z" fill="#8e8e8e"/>
<path d="M0.8 2.7 H8.4 L8.1 10.8 H1.1 Z" fill="#c0c0c0"/>
<rect x="2" y="3.4" width="1.05" height="6.9" fill="#747474"/>
<rect x="4.07" y="3.4" width="1.05" height="6.9" fill="#747474"/>
<rect x="6.15" y="3.4" width="1.05" height="6.9" fill="#747474"/>
</svg></span></div><div class="row odd" style="top:439.62px"><div class="cb" style="top:5.7px"></div><a class="t lnk" style="left:29px">111526/1</a><span class="t" style="left:143px"><a class="lnk">#111526</a> <span class="mut">10th-Sept-1</span></span><span class="badge b-po">Processing Order</span><span class="t" style="left:367px">Alicia May</span><span class="t" style="left:435px">Bristol</span><span class="icw" style="left:527px"><svg class="ic" width="9" height="8.3" viewBox="0 0 9 8.3"><path d="M1.15 1.15 L7.6 7.1 M7.6 1.15 L1.15 7.1" fill="none" stroke="#e65e5e" stroke-width="2.1" stroke-linecap="round"/></svg></span><span class="icw" style="left:570.4px"><svg class="ic" width="9" height="8.3" viewBox="0 0 9 8.3"><path d="M1.15 1.15 L7.6 7.1 M7.6 1.15 L1.15 7.1" fill="none" stroke="#e65e5e" stroke-width="2.1" stroke-linecap="round"/></svg></span><span class="icw" style="left:612.25px"><svg class="ic" width="9" height="8.3" viewBox="0 0 9 8.3"><path d="M1.15 1.15 L7.6 7.1 M7.6 1.15 L1.15 7.1" fill="none" stroke="#e65e5e" stroke-width="2.1" stroke-linecap="round"/></svg></span><span class="icw" style="left:656.75px"><svg class="ic" width="9" height="8.3" viewBox="0 0 9 8.3"><path d="M1.15 1.15 L7.6 7.1 M7.6 1.15 L1.15 7.1" fill="none" stroke="#e65e5e" stroke-width="2.1" stroke-linecap="round"/></svg></span><span class="acts"><svg class="pr" width="10.2" height="11" viewBox="0 0 10.2 11">
<path d="M1.5 4.6 L2.1 0.5 Q2.2 0.1 2.6 0.1 H7.6 Q8 0.1 8.1 0.5 L8.7 4.6 Z" fill="#9cc3ef"/>
<rect x="3.1" y="1" width="3.9" height="2.3" fill="#dbe9fa"/>
<rect x="0" y="4.1" width="10.2" height="5.4" rx="2" fill="#949494"/>
<rect x="0.7" y="4.7" width="8.8" height="2.4" rx="1" fill="#dedede"/>
<rect x="0.7" y="7.2" width="8.8" height="1.3" rx="0.6" fill="#b9b9b9"/>
<path d="M1.5 8.9 H8.7 L8.5 10.9 H1.7 Z" fill="#b6d3f3"/>
</svg><svg class="tr" width="9.2" height="11" viewBox="0 0 9.2 11">
<path d="M2.9 1.3 Q3 0.1 4.6 0.1 Q6.2 0.1 6.3 1.3 Z" fill="#7c7c7c"/>
<path d="M0.4 1.7 Q0.4 1.1 1.1 1.1 H8.1 Q8.8 1.1 8.8 1.7 L8.7 2.8 H0.5 Z" fill="#8e8e8e"/>
<path d="M0.8 2.7 H8.4 L8.1 10.8 H1.1 Z" fill="#c0c0c0"/>
<rect x="2" y="3.4" width="1.05" height="6.9" fill="#747474"/>
<rect x="4.07" y="3.4" width="1.05" height="6.9" fill="#747474"/>
<rect x="6.15" y="3.4" width="1.05" height="6.9" fill="#747474"/>
</svg></span></div><div class="row" style="top:460.45px"><div class="cb" style="top:5.7px"></div><a class="t lnk" style="left:29px">111527/1</a><span class="t" style="left:143px"><a class="lnk">#111527</a> <span class="mut">10th-Sept-2</span></span><span class="badge b-po">Processing Order</span><span class="t" style="left:367px">Alicia May</span><span class="t" style="left:435px">Bristol</span><span class="icw" style="left:527px"><svg class="ic" width="9" height="8.3" viewBox="0 0 9 8.3"><path d="M1.15 1.15 L7.6 7.1 M7.6 1.15 L1.15 7.1" fill="none" stroke="#e65e5e" stroke-width="2.1" stroke-linecap="round"/></svg></span><span class="icw" style="left:570.4px"><svg class="ic" width="9" height="8.3" viewBox="0 0 9 8.3"><path d="M1.15 1.15 L7.6 7.1 M7.6 1.15 L1.15 7.1" fill="none" stroke="#e65e5e" stroke-width="2.1" stroke-linecap="round"/></svg></span><span class="icw" style="left:612.25px"><svg class="ic" width="9" height="8.3" viewBox="0 0 9 8.3"><path d="M1.15 1.15 L7.6 7.1 M7.6 1.15 L1.15 7.1" fill="none" stroke="#e65e5e" stroke-width="2.1" stroke-linecap="round"/></svg></span><span class="icw" style="left:656.75px"><svg class="ic" width="9" height="8.3" viewBox="0 0 9 8.3"><path d="M1.15 1.15 L7.6 7.1 M7.6 1.15 L1.15 7.1" fill="none" stroke="#e65e5e" stroke-width="2.1" stroke-linecap="round"/></svg></span><span class="acts"><svg class="pr" width="10.2" height="11" viewBox="0 0 10.2 11">
<path d="M1.5 4.6 L2.1 0.5 Q2.2 0.1 2.6 0.1 H7.6 Q8 0.1 8.1 0.5 L8.7 4.6 Z" fill="#9cc3ef"/>
<rect x="3.1" y="1" width="3.9" height="2.3" fill="#dbe9fa"/>
<rect x="0" y="4.1" width="10.2" height="5.4" rx="2" fill="#949494"/>
<rect x="0.7" y="4.7" width="8.8" height="2.4" rx="1" fill="#dedede"/>
<rect x="0.7" y="7.2" width="8.8" height="1.3" rx="0.6" fill="#b9b9b9"/>
<path d="M1.5 8.9 H8.7 L8.5 10.9 H1.7 Z" fill="#b6d3f3"/>
</svg><svg class="tr" width="9.2" height="11" viewBox="0 0 9.2 11">
<path d="M2.9 1.3 Q3 0.1 4.6 0.1 Q6.2 0.1 6.3 1.3 Z" fill="#7c7c7c"/>
<path d="M0.4 1.7 Q0.4 1.1 1.1 1.1 H8.1 Q8.8 1.1 8.8 1.7 L8.7 2.8 H0.5 Z" fill="#8e8e8e"/>
<path d="M0.8 2.7 H8.4 L8.1 10.8 H1.1 Z" fill="#c0c0c0"/>
<rect x="2" y="3.4" width="1.05" height="6.9" fill="#747474"/>
<rect x="4.07" y="3.4" width="1.05" height="6.9" fill="#747474"/>
<rect x="6.15" y="3.4" width="1.05" height="6.9" fill="#747474"/>
</svg></span></div><div class="row odd" style="top:481.28px"><div class="cb" style="top:5.7px"></div><a class="t lnk" style="left:29px">111528/1</a><span class="t" style="left:143px"><a class="lnk">#111528</a> <span class="mut">10th-Sept-3</span></span><span class="badge b-po">Processing Order</span><span class="t" style="left:367px">Alicia May</span><span class="t" style="left:435px">Bristol</span><span class="icw" style="left:527px"><svg class="ic" width="9" height="8.3" viewBox="0 0 9 8.3"><path d="M1.15 1.15 L7.6 7.1 M7.6 1.15 L1.15 7.1" fill="none" stroke="#e65e5e" stroke-width="2.1" stroke-linecap="round"/></svg></span><span class="icw" style="left:570.4px"><svg class="ic" style="margin-left:-0.9px" width="10" height="8" viewBox="0 0 10 8"><path d="M1.2 4.2 L3.7 6.6 L8.8 1.2" fill="none" stroke="#68b860" stroke-width="2" stroke-linecap="round" stroke-linejoin="round"/></svg></span><span class="icw" style="left:612.25px"><svg class="ic" style="margin-left:-0.9px" width="10" height="8" viewBox="0 0 10 8"><path d="M1.2 4.2 L3.7 6.6 L8.8 1.2" fill="none" stroke="#68b860" stroke-width="2" stroke-linecap="round" stroke-linejoin="round"/></svg></span><span class="icw" style="left:656.75px"><svg class="ic" width="9" height="8.3" viewBox="0 0 9 8.3"><path d="M1.15 1.15 L7.6 7.1 M7.6 1.15 L1.15 7.1" fill="none" stroke="#e65e5e" stroke-width="2.1" stroke-linecap="round"/></svg></span><span class="acts"><svg class="pr" width="10.2" height="11" viewBox="0 0 10.2 11">
<path d="M1.5 4.6 L2.1 0.5 Q2.2 0.1 2.6 0.1 H7.6 Q8 0.1 8.1 0.5 L8.7 4.6 Z" fill="#9cc3ef"/>
<rect x="3.1" y="1" width="3.9" height="2.3" fill="#dbe9fa"/>
<rect x="0" y="4.1" width="10.2" height="5.4" rx="2" fill="#949494"/>
<rect x="0.7" y="4.7" width="8.8" height="2.4" rx="1" fill="#dedede"/>
<rect x="0.7" y="7.2" width="8.8" height="1.3" rx="0.6" fill="#b9b9b9"/>
<path d="M1.5 8.9 H8.7 L8.5 10.9 H1.7 Z" fill="#b6d3f3"/>
</svg><svg class="tr" width="9.2" height="11" viewBox="0 0 9.2 11">
<path d="M2.9 1.3 Q3 0.1 4.6 0.1 Q6.2 0.1 6.3 1.3 Z" fill="#7c7c7c"/>
<path d="M0.4 1.7 Q0.4 1.1 1.1 1.1 H8.1 Q8.8 1.1 8.8 1.7 L8.7 2.8 H0.5 Z" fill="#8e8e8e"/>
<path d="M0.8 2.7 H8.4 L8.1 10.8 H1.1 Z" fill="#c0c0c0"/>
<rect x="2" y="3.4" width="1.05" height="6.9" fill="#747474"/>
<rect x="4.07" y="3.4" width="1.05" height="6.9" fill="#747474"/>
<rect x="6.15" y="3.4" width="1.05" height="6.9" fill="#747474"/>
</svg></span></div>
<div id="bline"></div>
<div style="position:absolute;left:310px;top:526px;width:380px;height:30px;border-radius:14px;background:#eee;box-shadow:0 0 24px 9px rgba(0,0,0,0.07)"></div>
</body></html>
